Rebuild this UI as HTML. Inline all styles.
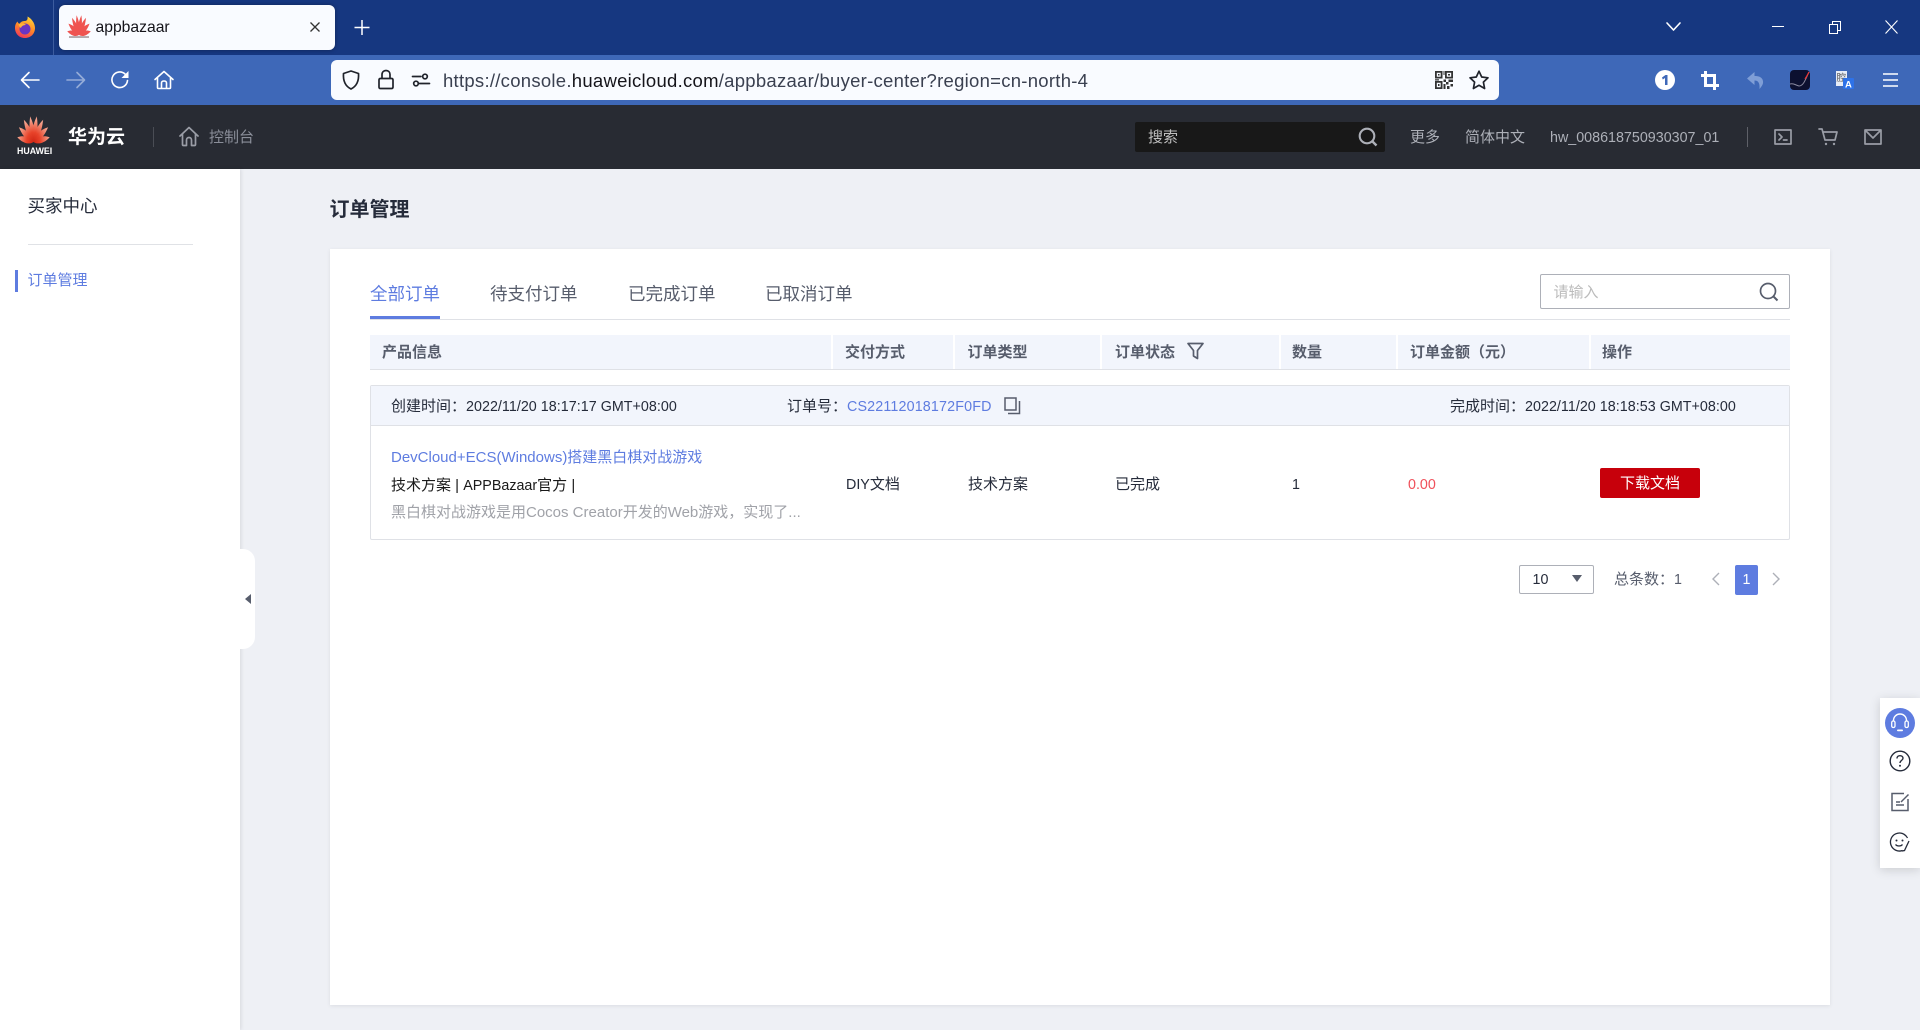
<!DOCTYPE html>
<html lang="zh-CN"><head><meta charset="utf-8"><title>appbazaar</title>
<style>
*{box-sizing:border-box}
html,body{margin:0;padding:0;width:1920px;height:1030px;overflow:hidden;background:#eef0f5;font-family:"Liberation Sans","Noto Sans CJK SC",sans-serif;font-size:15px;color:#252b3a}
.a{position:absolute}
.t{position:absolute;white-space:nowrap;line-height:20px;height:20px}
.l{font-size:14.3px}
svg{position:absolute;overflow:visible}
.hd{font-weight:700;color:#575d6c}
.tb{font-size:17.5px;color:#575d6c;line-height:24px;height:24px}
.ln{fill:none;stroke:#fff;stroke-width:1.6;stroke-linecap:round;stroke-linejoin:round}
.dk{fill:none;stroke:#20232b;stroke-width:1.7;stroke-linecap:round;stroke-linejoin:round}
.gy{fill:none;stroke:#9a9da6;stroke-width:1.7;stroke-linecap:round;stroke-linejoin:round}
</style></head><body>

<!-- browser tab strip -->
<div class="a" style="left:0;top:0;width:1920px;height:55px;background:#163780"></div>
<div class="a" style="left:53px;top:0;width:1px;height:55px;background:#3d5c9e"></div>
<svg style="left:13px;top:15px" width="24" height="24" viewBox="0 0 24 24">
<defs><linearGradient id="ff" x1="0.7" y1="0" x2="0.3" y2="1"><stop offset="0" stop-color="#ffd53a"/><stop offset=".5" stop-color="#ff8a25"/><stop offset="1" stop-color="#f0345e"/></linearGradient></defs>
<path d="M12 23C5.500 23 2 18 2 13 2 10 3 8 4.500 6.500 5 8 5.800 8.500 6.500 8.800 8 6.500 10 6 12 6 14 6 15 4 14.500 1.500 18 3 22 8 22 13 22 18.500 18 23 12 23Z" fill="url(#ff)"/>
<circle cx="12" cy="14" r="5.500" fill="#6a35c4"/><path d="M5.500 9.500C8 8 11 8 13 10 10.500 10 8.500 11 8 13 7 12.500 6 11 5.500 9.500Z" fill="#ffb43a"/>
</svg>
<div class="a" style="left:59px;top:5px;width:276px;height:45px;background:#f9fbff;border-radius:6px;box-shadow:0 0 4px rgba(0,0,0,.35)"></div>
<svg style="left:69px;top:18px" width="20" height="20" viewBox="-13 -17 26 26">
<g fill="#ef5350" transform="scale(.68,1)"><path d="M0 5C-4 0-5-9-.5-21 4.500-9 4 0 0 5Z" transform="rotate(-9 0 5)"/><path d="M0 5C-4 0-5-9 .5-21 5-9 4 0 0 5Z" transform="rotate(9 0 5)"/><path d="M0 5C-4 0-5-9 0-21 5-9 4 0 0 5Z" transform="rotate(-31 0 5)"/><path d="M0 5C-4 0-5-9 0-21 5-9 4 0 0 5Z" transform="rotate(31 0 5)"/><path d="M0 5C-4 0-5-9 0-20 5-9 4 0 0 5Z" transform="rotate(-54 0 5)"/><path d="M0 5C-4 0-5-9 0-20 5-9 4 0 0 5Z" transform="rotate(54 0 5)"/><path d="M0 5C-4 0-4.500-9 0-18 4.500-9 4 0 0 5Z" transform="rotate(-78 0 5)"/><path d="M0 5C-4 0-4.500-9 0-18 4.500-9 4 0 0 5Z" transform="rotate(78 0 5)"/></g>
<rect x="-13" y="6.500" width="26" height="2.500" fill="#b4a8ac"/></svg>
<div class="t" style="left:95.500px;top:18px;font-size:15.700px;color:#15141a">appbazaar</div>
<svg style="left:309px;top:21px" width="12" height="12"><path d="M1.500 1.500L10.500 10.500M10.500 1.500L1.500 10.500" stroke="#333" stroke-width="1.300" fill="none"/></svg>
<svg style="left:354px;top:20px" width="16" height="16"><path d="M8 0V15M0.500 7.500H15.500" stroke="#fff" stroke-width="1.500" fill="none"/></svg>
<svg style="left:1666px;top:22px" width="15" height="10"><path d="M1 1L7.500 8 14 1" class="ln" stroke-linecap="butt" stroke-width="1.400"/></svg>
<div class="a" style="left:1772px;top:26px;width:12px;height:1px;background:#fff"></div>
<svg style="left:1829px;top:21px" width="12" height="13"><path d="M.5 3.500H8.500V12.500H.5ZM3.500 3.500V.5H11.500V9.500H8.500" fill="none" stroke="#fff"/></svg>
<svg style="left:1885px;top:20px" width="13" height="14"><path d="M.5.5L12.500 13.500M12.500.5L.5 13.500" stroke="#fff" stroke-width="1.100"/></svg>

<!-- toolbar -->
<div class="a" style="left:0;top:55px;width:1920px;height:50px;background:#3e68b8"></div>
<svg style="left:20px;top:70px" width="20" height="20" viewBox="0 0 20 20"><path class="ln" d="M19 10H2M9 2.500L1.500 10 9 17.500"/></svg>
<svg style="left:66px;top:70px" width="20" height="20" viewBox="0 0 20 20" opacity=".45"><path class="ln" d="M1 10H18M11 2.500L18.500 10 11 17.500"/></svg>
<svg style="left:110px;top:70px" width="20" height="20" viewBox="0 0 20 20"><path class="ln" stroke-width="1.800" d="M17.500 10.500A7.800 7.800 0 1 1 15 4"/><path d="M18.500 1V8H11.500Z" fill="#fff"/></svg>
<svg style="left:154px;top:70px" width="20" height="20" viewBox="0 0 20 20"><path class="ln" d="M1 9.500L10 1.500 19 9.500M3.500 8V17.500C3.500 18.200 4 18.500 4.500 18.500H15.500C16 18.500 16.500 18.200 16.500 17.500V8M7.500 18.500V13C7.500 11.800 8.500 11 10 11 11.500 11 12.500 11.800 12.500 13V18.500"/></svg>

<div class="a" style="left:331px;top:60px;width:1168px;height:40px;background:#f9fbff;border-radius:6px"></div>
<svg style="left:342px;top:70px" width="18" height="20" viewBox="0 0 18 20"><path class="dk" d="M9 1L16.500 3.500C17 10 15 16 9 19 3 16 1 10 1.500 3.500Z"/></svg>
<svg style="left:378px;top:69px" width="16" height="21" viewBox="0 0 16 21"><path class="dk" d="M2.500 9.500H13.500C14.500 9.500 15 10 15 11V18C15 19 14.500 19.500 13.500 19.500H2.500C1.500 19.500 1 19 1 18V11C1 10 1.500 9.500 2.500 9.500ZM4 9.500V5.500C4 3 5.700 1.500 8 1.500 10.300 1.500 12 3 12 5.500V9.500"/></svg>
<svg style="left:412px;top:73px" width="18" height="14" viewBox="0 0 18 14"><g class="dk" stroke-width="1.500"><circle cx="13" cy="3.500" r="2.300"/><circle cx="4" cy="10.500" r="2.300"/><path d="M.5 3.500H9M7.500 10.500H17.500"/></g></svg>
<div class="t" style="left:443px;top:69px;height:24px;line-height:24px;font-size:18.500px;color:#3a4050;letter-spacing:.27px"><span>https://console.</span><span style="color:#15141a">huaweicloud.com</span><span>/appbazaar/buyer-center?region=cn-north-4</span></div>
<svg style="left:1435px;top:71px" width="18" height="18" viewBox="0 0 18 18" fill="#333"><path fill-rule="evenodd" d="M0 0H7.500V7.500H0ZM1.800 1.800V5.700H5.700V1.800ZM10 0H18V7.500H10ZM11.800 1.800V5.700H16.200V1.800ZM0 10H7.500V18H0ZM1.800 11.800V16.200H5.700V11.800Z"/><path d="M3 3H4.500V4.500H3ZM13 3H15V4.500H13ZM3 13H4.500V15H3ZM8.500 0H9.500V4H8.500ZM8.500 8.500H11V11H8.500ZM11 11H13.500V13.500H11ZM13.500 8.500H18V11H13.500ZM15.500 13H18V15.500H15.500ZM8.500 13H10.500V18H8.500ZM12 15H14.500V18H12ZM0 8.300H4V9.500H0Z"/></svg>
<svg style="left:1469px;top:70px" width="20" height="20" viewBox="0 0 20 20"><path class="dk" d="M10 1.200L12.700 7 19 7.800 14.400 12.100 15.600 18.500 10 15.300 4.400 18.500 5.600 12.100 1 7.800 7.300 7Z"/></svg>

<svg style="left:1655px;top:70px" width="20" height="20" viewBox="0 0 20 20"><circle cx="10" cy="10" r="10" fill="#fff"/><path d="M7 7.500L10.500 5H12.500V15H10V8L7.800 9.500Z" fill="#3e68b8"/></svg>
<svg style="left:1701px;top:71px" width="18" height="19" viewBox="0 0 18 19" fill="none" stroke="#fff" stroke-width="3"><path d="M4.500 0V14.500H18M0 4.500H13.500V19"/></svg>
<svg style="left:1747px;top:72px" width="17" height="17" viewBox="0 0 17 17"><path d="M7.500 0L0 6.500 7.500 13V8.500C11 8.500 13 10.500 12.500 17 15.500 13.500 17 11 15.500 7.500 14 4.500 11 4 7.500 4Z" fill="#7f9ed6"/></svg>
<div class="a" style="left:1790px;top:70px;width:20px;height:20px;border-radius:4px;background:#0c1030"></div>
<svg style="left:1790px;top:70px" width="20" height="20"><path d="M0 14C4 13 5 15 9 16 13 16 15 11 19 2" fill="none" stroke="#8a8aa0" stroke-width="1"/><path d="M15 9Q17 6 19 2" fill="none" stroke="#e33" stroke-width="1.200"/></svg>
<svg style="left:1836px;top:71px" width="19" height="19" viewBox="0 0 19 19"><rect x="0" y="0" width="11" height="15" fill="#e8edf7"/><text x="0.500" y="10" font-size="9.500" fill="#555" font-family="Noto Sans CJK SC">腔</text><rect x="7" y="7" width="11" height="11" rx="1" fill="#2e72e8"/><text x="9" y="16.500" font-size="9.500" font-weight="700" fill="#fff" font-family="Liberation Sans">A</text></svg>
<svg style="left:1883px;top:73px" width="15" height="14"><path d="M0 1H15M0 7H15M0 13H15" stroke="#fff" stroke-width="1.500"/></svg>

<!-- app header -->
<div class="a" style="left:0;top:105px;width:1920px;height:64px;background:#282b33"></div>
<svg style="left:17px;top:120px" width="33" height="25" viewBox="-16.500 -17 33 25">
<defs><linearGradient id="hw" gradientUnits="userSpaceOnUse" x1="0" y1="-17" x2="0" y2="8"><stop offset="0" stop-color="#f4a08a"/><stop offset=".5" stop-color="#e8432a"/><stop offset="1" stop-color="#c81e0e"/></linearGradient></defs>
<g fill="url(#hw)" transform="scale(.72,1)"><path d="M0 5C-4 0-5-9-.5-21 4.500-9 4 0 0 5Z" transform="rotate(-9 0 5)"/><path d="M0 5C-4 0-5-9 .5-21 5-9 4 0 0 5Z" transform="rotate(9 0 5)"/><path d="M0 5C-4 0-5-9 0-21 5-9 4 0 0 5Z" transform="rotate(-31 0 5)"/><path d="M0 5C-4 0-5-9 0-21 5-9 4 0 0 5Z" transform="rotate(31 0 5)"/><path d="M0 5C-4 0-5-9 0-20 5-9 4 0 0 5Z" transform="rotate(-54 0 5)"/><path d="M0 5C-4 0-5-9 0-20 5-9 4 0 0 5Z" transform="rotate(54 0 5)"/><path d="M0 5C-4 0-4.500-9 0-18 4.500-9 4 0 0 5Z" transform="rotate(-78 0 5)"/><path d="M0 5C-4 0-4.500-9 0-18 4.500-9 4 0 0 5Z" transform="rotate(78 0 5)"/></g></svg>
<div class="t" style="left:17px;top:146px;height:10px;line-height:10px;font-size:8.800px;font-weight:700;color:#fff;width:33px;text-align:center">HUAWEI</div>
<div class="t" style="left:68px;top:126px;height:24px;line-height:24px;font-size:19px;font-weight:700;color:#fff">华为云</div>
<div class="a" style="left:153px;top:127px;width:1px;height:20px;background:#4a4d55"></div>
<svg style="left:179px;top:126px" width="20" height="21" viewBox="0 0 20 21"><path class="gy" d="M1 10L10 1.500 19 10M3.500 8V18.500C3.500 19.200 4 19.500 4.500 19.500H7.500V14C7.500 12.500 8.500 11.500 10 11.500 11.500 11.500 12.500 12.500 12.500 14V19.500H15.500C16 19.500 16.500 19.200 16.500 18.500V8"/></svg>
<div class="t" style="left:209px;top:128px;color:#8a8e99">控制台</div>
<div class="a" style="left:1135px;top:122px;width:250px;height:30px;background:#181818;border-radius:2px"></div>
<div class="t" style="left:1148px;top:128px;color:#bfbfbf">搜索</div>
<svg style="left:1358px;top:127px" width="20" height="20" viewBox="0 0 20 20"><circle cx="9" cy="9" r="7.300" fill="none" stroke="#adb0b8" stroke-width="2.100"/><path d="M14 14L18.500 18.500" stroke="#adb0b8" stroke-width="2.400"/></svg>
<div class="t" style="left:1410px;top:128px;color:#adb0b8">更多</div>
<div class="t" style="left:1465px;top:128px;color:#adb0b8">简体中文</div>
<div class="t l" style="left:1550px;top:128px;color:#adb0b8">hw_008618750930307_01</div>
<div class="a" style="left:1747px;top:127px;width:1px;height:20px;background:#5e6068"></div>
<svg style="left:1774px;top:129px" width="18" height="16" viewBox="0 0 18 16"><path class="gy" d="M1 1H17V15H1ZM5 5L8 8 5 11M9.500 11H13"/></svg>
<svg style="left:1818px;top:128px" width="20" height="18" viewBox="0 0 20 18"><path class="gy" d="M1 1H4L7 12H17L19 4H5"/><circle cx="8" cy="16" r="1.200" fill="#9a9da6"/><circle cx="16" cy="16" r="1.200" fill="#9a9da6"/></svg>
<svg style="left:1864px;top:129px" width="18" height="16" viewBox="0 0 18 16"><path class="gy" d="M1 1H17V15H1ZM1 1L9 9 17 1"/></svg>

<!-- sidebar -->
<div class="a" style="left:0;top:169px;width:240px;height:861px;background:#fff;box-shadow:1px 0 4px rgba(0,0,0,.1)"></div>
<div class="t" style="left:27.500px;top:194px;font-size:17.500px;height:24px;line-height:24px;color:#252b3a">买家中心</div>
<div class="a" style="left:28px;top:243.500px;width:165px;height:1px;background:#e0e2e6"></div>
<div class="a" style="left:15px;top:270px;width:3px;height:22px;background:#5e7ce0"></div>
<div class="t" style="left:27.500px;top:271px;color:#5e7ce0">订单管理</div>
<div class="a" style="left:240px;top:549px;width:15px;height:100px;background:#fff;border-radius:0 12px 12px 0"></div>
<div class="a" style="left:245px;top:594px;width:0;height:0;border-top:5px solid transparent;border-bottom:5px solid transparent;border-right:6px solid #575d6c"></div>

<!-- main -->
<div class="t" style="left:329.500px;top:197px;font-size:20px;font-weight:700;height:26px;line-height:26px;color:#252b3a">订单管理</div>
<div class="a" style="left:330px;top:249px;width:1500px;height:756px;background:#fff;box-shadow:0 1px 4px rgba(0,0,0,.08)"></div>

<div class="t tb" style="left:370px;top:282px;color:#5e7ce0">全部订单</div>
<div class="t tb" style="left:490px;top:282px">待支付订单</div>
<div class="t tb" style="left:628px;top:282px">已完成订单</div>
<div class="t tb" style="left:765px;top:282px">已取消订单</div>
<div class="a" style="left:370px;top:319px;width:1420px;height:1px;background:#dfe1e6"></div>
<div class="a" style="left:370px;top:316px;width:70px;height:3px;background:#5e7ce0"></div>
<div class="a" style="left:1540px;top:274px;width:250px;height:35px;border:1px solid #adb0b8;border-radius:2px;background:#fff"></div>
<div class="t" style="left:1553.500px;top:283px;color:#bbb">请输入</div>
<svg style="left:1759px;top:282px" width="20" height="20" viewBox="0 0 20 20"><circle cx="9" cy="9" r="7.500" fill="none" stroke="#575d6c" stroke-width="1.700"/><path d="M14 14L18.500 18.500" stroke="#575d6c" stroke-width="2"/></svg>

<div class="a" style="left:370px;top:335px;width:1420px;height:35px;background:#f2f5fc;border-bottom:1px solid #dfe1e6"></div>
<div class="a" style="left:831px;top:335px;width:2px;height:34px;background:#fff"></div>
<div class="a" style="left:953px;top:335px;width:2px;height:34px;background:#fff"></div>
<div class="a" style="left:1100px;top:335px;width:2px;height:34px;background:#fff"></div>
<div class="a" style="left:1279px;top:335px;width:2px;height:34px;background:#fff"></div>
<div class="a" style="left:1396px;top:335px;width:2px;height:34px;background:#fff"></div>
<div class="a" style="left:1589px;top:335px;width:2px;height:34px;background:#fff"></div>
<div class="t hd" style="left:382px;top:342.500px">产品信息</div>
<div class="t hd" style="left:845px;top:342.500px">交付方式</div>
<div class="t hd" style="left:967.500px;top:342.500px">订单类型</div>
<div class="t hd" style="left:1115px;top:342.500px">订单状态</div>
<svg style="left:1187px;top:342px" width="17" height="18" viewBox="0 0 17 18"><path d="M1 1.500H16L10.500 8.500V16.500L6.500 14V8.500Z" fill="none" stroke="#575d6c" stroke-width="1.700" stroke-linejoin="round"/></svg>
<div class="t hd" style="left:1292px;top:342.500px">数量</div>
<div class="t hd" style="left:1410px;top:342.500px">订单金额（元）</div>
<div class="t hd" style="left:1602px;top:342.500px">操作</div>

<div class="a" style="left:370px;top:385px;width:1420px;height:155px;border:1px solid #dfe1e6;border-radius:2px;background:#fff"></div>
<div class="a" style="left:371px;top:386px;width:1418px;height:40px;background:#f2f5fc;border-bottom:1px solid #dfe1e6"></div>
<div class="t" style="left:391px;top:396.500px">创建时间：</div>
<div class="t l" style="left:466px;top:396.500px;letter-spacing:.03px">2022/11/20 18:17:17 GMT+08:00</div>
<div class="t" style="left:787px;top:396.500px">订单号：</div>
<div class="t l" style="left:847px;top:396.500px;color:#5e7ce0;letter-spacing:.15px">CS22112018172F0FD</div>
<svg style="left:1003px;top:397px" width="18" height="18" viewBox="0 0 18 18"><path d="M2 1H13V13H2Z" fill="none" stroke="#575d6c" stroke-width="1.500"/><path d="M16.500 4V16.500H5" fill="none" stroke="#575d6c" stroke-width="1.500"/></svg>
<div class="t" style="left:1450px;top:396.500px">完成时间：</div>
<div class="t l" style="left:1525px;top:396.500px;letter-spacing:.03px">2022/11/20 18:18:53 GMT+08:00</div>

<div class="t" style="left:391px;top:447.500px;color:#5e7ce0">DevCloud+ECS(Windows)搭建黑白棋对战游戏</div>
<div class="t" style="left:391px;top:475.500px;color:#191919">技术方案 | <span class="l">APPBazaar</span>官方 |</div>
<div class="t" style="left:391px;top:503px;color:#a0a2a8">黑白棋对战游戏是用Cocos Creator开发的Web游戏，实现了...</div>
<div class="t" style="left:846px;top:475px"><span class="l">DIY</span>文档</div>
<div class="t" style="left:968px;top:475px">技术方案</div>
<div class="t" style="left:1115px;top:475px">已完成</div>
<div class="t l" style="left:1292px;top:475px">1</div>
<div class="t l" style="left:1408px;top:475px;color:#f0505a">0.00</div>
<div class="a" style="left:1600px;top:468px;width:100px;height:30px;background:#c7000b;border-radius:2px;color:#fff;text-align:center;line-height:32px">下载文档</div>

<div class="a" style="left:1519px;top:565px;width:75px;height:29px;border:1px solid #adb0b8;border-radius:2px"></div>
<div class="t l" style="left:1532.500px;top:570px">10</div>
<div class="a" style="left:1572px;top:575px;width:0;height:0;border-left:5px solid transparent;border-right:5px solid transparent;border-top:7px solid #575d6c"></div>
<div class="t" style="left:1614px;top:570px;color:#575d6c">总条数：<span class="l">1</span></div>
<svg style="left:1712px;top:572px" width="8" height="14"><path d="M7 1L1 7 7 13" fill="none" stroke="#adb0b8" stroke-width="1.400"/></svg>
<div class="a" style="left:1735px;top:565px;width:23px;height:30px;background:#5e7ce0;border-radius:2px;color:#fff;text-align:center;line-height:30px;font-size:14.300px">1</div>
<svg style="left:1772px;top:572px" width="8" height="14"><path d="M1 1L7 7 1 13" fill="none" stroke="#adb0b8" stroke-width="1.400"/></svg>

<!-- floating tools -->
<div class="a" style="left:1880px;top:698px;width:40px;height:170px;background:#fff;box-shadow:0 2px 10px rgba(0,0,0,.15)"></div>
<svg style="left:1885px;top:708px" width="30" height="30" viewBox="0 0 30 30"><circle cx="15" cy="15" r="15" fill="#5e7ce0"/><path d="M8.500 13.500V12.500A6.500 6.500 0 0 1 21.500 12.500V13.500" fill="none" stroke="#fff" stroke-width="1.400"/><rect x="6.700" y="13" width="3.300" height="6.500" rx="1.500" fill="none" stroke="#fff" stroke-width="1.300"/><rect x="20" y="13" width="3.300" height="6.500" rx="1.500" fill="none" stroke="#fff" stroke-width="1.300"/><rect x="12" y="21.500" width="6" height="1.800" rx=".9" fill="#fff"/></svg>
<svg style="left:1889px;top:750px" width="22" height="22" viewBox="0 0 22 22"><circle cx="11" cy="11" r="9.800" fill="none" stroke="#252b3a" stroke-width="1.400"/><path d="M8 8.500C8 6.500 9.500 5.700 11 5.700 12.800 5.700 14 6.800 14 8.200 14 10.300 11 10.500 11 13" fill="none" stroke="#252b3a" stroke-width="1.400"/><circle cx="11" cy="15.800" r="1" fill="#252b3a"/></svg>
<svg style="left:1891px;top:792px" width="19" height="20" viewBox="0 0 19 20"><path d="M13 1.500H1V18.500H17V7" fill="none" stroke="#575d6c" stroke-width="1.500"/><path d="M10 10L17.500 2.500" stroke="#575d6c" stroke-width="1.500"/><path d="M5 10H9M5 13H13" stroke="#575d6c" stroke-width="1.500"/></svg>
<svg style="left:1890px;top:832px" width="20" height="20" viewBox="0 0 20 20"><path d="M12.500 18.500A9 9 0 1 1 17.500 6" fill="none" stroke="#252b3a" stroke-width="1.300"/><circle cx="6.500" cy="8.500" r="1" fill="#252b3a"/><circle cx="12.500" cy="8.500" r="1" fill="#252b3a"/><path d="M5.500 12.500C7 14.500 11 14.500 12.500 12.500" fill="none" stroke="#252b3a" stroke-width="1.300"/><path d="M19 9L14.500 18.500 12 19" fill="none" stroke="#252b3a" stroke-width="1.300"/></svg>
</body></html>
